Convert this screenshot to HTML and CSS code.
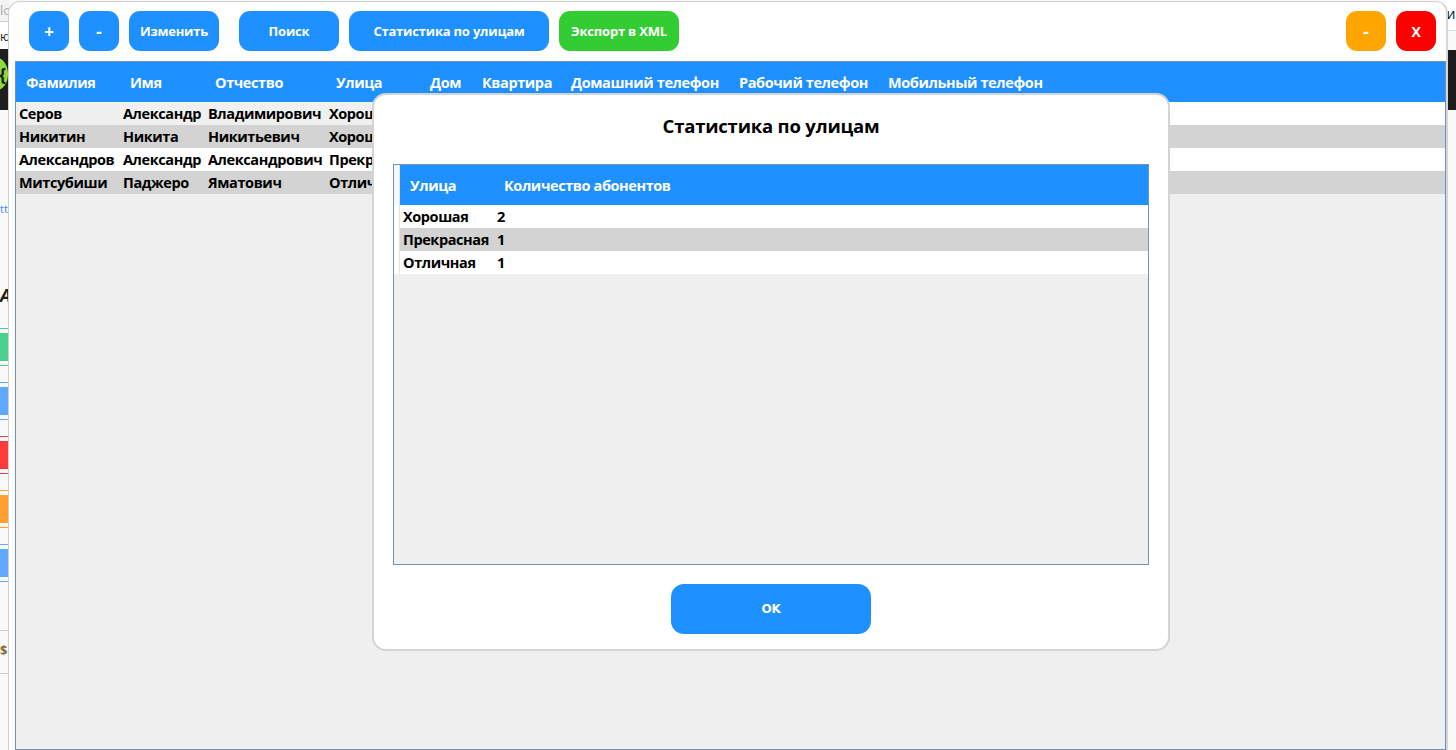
FILE: index.html
```html
<!DOCTYPE html>
<html lang="ru">
<head>
<meta charset="utf-8">
<title>Абоненты</title>
<link rel="stylesheet" href="styles.css">
</head>
<body>
<div class="desk">
  <div class="strip strip-left">
    <div class="sl-top">lo</div>
    <div class="sl-white">ю</div>
    <div class="sl-dark"><span class="sl-logo">{</span></div>
    <div class="sl-link">tt</div>
    <div class="sl-a">A</div>
    <div class="sl-block green"></div>
    <div class="sl-block blue"></div>
    <div class="sl-block red"></div>
    <div class="sl-block orange"></div>
    <div class="sl-block blue"></div>
    <div class="sl-dollar">$</div>
  </div>
  <div class="strip strip-right">
    <div class="sr-top">ти</div>
    <div class="sr-dark"></div>
  </div>

  <div class="window">
    <div class="toolbar">
      <div class="tb-left">
        <button class="btn w40">+</button>
        <button class="btn w40">-</button>
        <button class="btn w90">Изменить</button>
        <button class="btn w100 gap">Поиск</button>
        <button class="btn w200">Статистика по улицам</button>
        <button class="btn w120 green">Экспорт в XML</button>
      </div>
      <div class="tb-right">
        <button class="btn w40 orange">-</button>
        <button class="btn w40 red">X</button>
      </div>
    </div>
    <div class="grid main">
      <div class="ghead">
        <div class="c c1">Фамилия</div>
        <div class="c c2">Имя</div>
        <div class="c c3">Отчество</div>
        <div class="c c4">Улица</div>
        <div class="c c5">Дом</div>
        <div class="c c6">Квартира</div>
        <div class="c c7">Домашний телефон</div>
        <div class="c c8">Рабочий телефон</div>
        <div class="c c9">Мобильный телефон</div>
      </div>
      <div class="grow sel">
        <div class="cells"><div class="c c1">Серов</div><div class="c c2">Александр</div><div class="c c3">Владимирович</div><div class="c c4">Хорошая</div><div class="c c5"></div><div class="c c6"></div><div class="c c7"></div><div class="c c8"></div><div class="c c9"></div></div>
      </div>
      <div class="grow alt">
        <div class="cells"><div class="c c1">Никитин</div><div class="c c2">Никита</div><div class="c c3">Никитьевич</div><div class="c c4">Хорошая</div></div>
      </div>
      <div class="grow">
        <div class="cells"><div class="c c1">Александров</div><div class="c c2">Александр</div><div class="c c3">Александрович</div><div class="c c4">Прекрасная</div></div>
      </div>
      <div class="grow alt">
        <div class="cells"><div class="c c1">Митсубиши</div><div class="c c2">Паджеро</div><div class="c c3">Яматович</div><div class="c c4">Отличная</div></div>
      </div>
    </div>
  </div>

  <div class="dialog">
    <h1 class="dtitle">Статистика по улицам</h1>
    <div class="grid dgrid">
      <div class="dhead">
        <div class="rh"></div>
        <div class="c d1">Улица</div>
        <div class="c d2">Количество абонентов</div>
      </div>
      <div class="drow"><div class="rh"></div><div class="c d1">Хорошая</div><div class="c d2">2</div></div>
      <div class="drow alt"><div class="rh"></div><div class="c d1">Прекрасная</div><div class="c d2">1</div></div>
      <div class="drow"><div class="rh"></div><div class="c d1">Отличная</div><div class="c d2">1</div></div>
    </div>
    <div class="dfoot">
      <button class="btn ok">OK</button>
    </div>
  </div>
</div>
</body>
</html>
```

FILE: styles.css
```css
* { box-sizing: border-box; }
html, body { margin: 0; padding: 0; }
body {
  width: 1456px;
  height: 750px;
  overflow: hidden;
  background: #f9f9f9;
  font-family: "Open Sans", "Noto Sans", sans-serif;
}
.desk { position: relative; width: 1456px; height: 750px; }

/* background (browser behind the app window) */
.strip { position: absolute; top: 0; display: flex; flex-direction: column; overflow: hidden; }
.strip-left { left: 0; width: 9px; height: 750px; }
.strip-right { right: 0; width: 10px; height: 750px; }
.sl-top { height: 22px; background: #f2f2f2; color: #aaa; font-size: 13px; line-height: 20px; border-bottom: 1px solid #ccc; }
.sl-white { height: 27px; background: #fff; color: #222; font-size: 12px; line-height: 30px; }
.sl-dark { height: 61px; background: #1e1e1e; position: relative; }
.sl-logo { position: absolute; left: -14px; top: 9px; width: 22px; height: 32px; border-radius: 50%; background: #8bdc3c; color: #1e1e1e; font-size: 18px; line-height: 32px; text-align: right; padding-right: 2px; font-weight: bold; }
.sl-link { margin-top: 92px; color: #3a8ef0; font-size: 11px; line-height: 14px; }
.sl-a { margin-top: 68px; font-size: 18px; font-style: italic; font-weight: bold; color: #222; line-height: 22px; }
.sl-block { height: 38px; margin-top: 16px; border-top: 1px solid; border-bottom: 1px solid; background-clip: content-box; padding: 4px 0; }
.sl-block.green { margin-top: 22px; border-color: #4cd08f; background-color: #4cd08f; }
.sl-block.blue { border-color: #60a9ff; background-color: #60a9ff; }
.sl-block.red { border-color: #ff3b3b; background-color: #ff3b3b; }
.sl-block.orange { border-color: #ffa030; background-color: #ffa030; }
.sl-dollar { margin-top: 48px; border-top: 1px solid #ccc; border-bottom: 1px solid #ccc; height: 44px; color: #8a6a3a; font-size: 13px; font-weight: bold; line-height: 38px; }
.sr-top { height: 31px; background: #fff; border-bottom: 1px solid #ddd; color: #111; font-size: 14px; line-height: 28px; margin-left: -6px; }
.sr-dark { height: 60px; margin-top: 19px; background: #1c1c1c; }

/* app window */
.window {
  position: absolute;
  left: 8px;
  top: 1px;
  width: 1440px;
  height: 749px;
  background: #fff;
  border: 1px solid #cfcfcf;
  border-bottom: none;
  border-right: 2px solid #d6d6d6;
  border-radius: 12px 12px 0 0;
  display: flex;
  flex-direction: column;
}
.toolbar {
  height: 59px;
  flex: none;
  display: flex;
  justify-content: space-between;
  align-items: flex-start;
  padding: 9px 10px 0 20px;
}
.tb-left, .tb-right { display: flex; gap: 10px; }
.btn {
  height: 40px;
  border: none;
  border-radius: 11px;
  background: #1e90ff;
  color: #fff;
  font-family: "Open Sans", "Noto Sans", sans-serif;
  font-weight: 700;
  font-size: 13px;
  padding: 0;
  letter-spacing: -0.2px;
}
.btn.w40 { width: 40px; font-size: 17px; }
.btn.w90 { width: 90px; }
.btn.w100 { width: 100px; }
.btn.gap { margin-left: 10px; }
.btn.w200 { width: 200px; }
.btn.w120 { width: 120px; }
.btn.green { background: #32cd32; }
.btn.orange { background: #ffa500; }
.btn.red { background: #ff0000; font-size: 14px; }

.grid { border: 1px solid #7590b8; background: #efefef; }
.main { margin: 0 0 0 6px; flex: 1; }
.c { flex: none; white-space: nowrap; overflow: hidden; }
.ghead {
  height: 40px;
  background: #1e90ff;
  color: #fff;
  display: flex;
  align-items: center;
  font-weight: 700;
  font-size: 14.5px;
  letter-spacing: -0.4px;
}
.ghead .c { padding-left: 10px; }
.grow { height: 23px; background: #fff; display: flex; }
.grow.alt { background: #d3d3d3; }
.cells { display: flex; align-items: center; font-weight: 700; font-size: 14.5px; letter-spacing: -0.4px; color: #000; }
.cells .c { padding-left: 3px; line-height: 23px; }
.grow.sel .cells { background: #f0f0f0; }
.c1 { width: 104px; }
.c2 { width: 85px; }
.c3 { width: 121px; }
.c4 { width: 94px; }
.c5 { width: 52px; }
.c6 { width: 89px; }
.c7 { width: 168px; }
.c8 { width: 149px; }
.c9 { width: 176px; }

/* dialog */
.dialog {
  position: absolute;
  left: 372px;
  top: 93px;
  width: 798px;
  height: 558px;
  background: #fff;
  border: 2px solid #d4d4d4;
  border-radius: 14px;
  display: flex;
  flex-direction: column;
  padding: 0 19px;
}
.dtitle {
  margin: 0;
  height: 69px;
  padding-top: 19px;
  text-align: center;
  font-size: 18.5px;
  font-weight: 700;
  letter-spacing: -0.2px;
  line-height: 24px;
  color: #000;
}
.dgrid { height: 401px; flex: none; }
.dhead {
  height: 40px;
  display: flex;
  align-items: stretch;
  color: #fff;
  font-weight: 700;
  font-size: 14.5px;
  letter-spacing: -0.4px;
}
.dhead .c { background: #1e90ff; display: flex; align-items: center; padding-left: 10px; }
.rh { width: 6px; flex: none; background: #f7f7f7; border-right: 1px solid #e4e4e4; }
.dhead .rh { background: #f7f7f7; }
.d1 { width: 94px; }
.d2 { flex: 1 !important; }
.drow { height: 23px; display: flex; background: #fff; font-weight: 700; font-size: 14.5px; letter-spacing: -0.4px; line-height: 23px; }
.drow.alt { background: #d3d3d3; }
.drow .c { padding-left: 3px; }
.drow .rh { background: #fff; }
.dfoot { display: flex; justify-content: center; padding-top: 19px; }
.btn.ok { width: 200px; height: 50px; border-radius: 13px; font-size: 12px; font-family: "DejaVu Sans", sans-serif; }
```
